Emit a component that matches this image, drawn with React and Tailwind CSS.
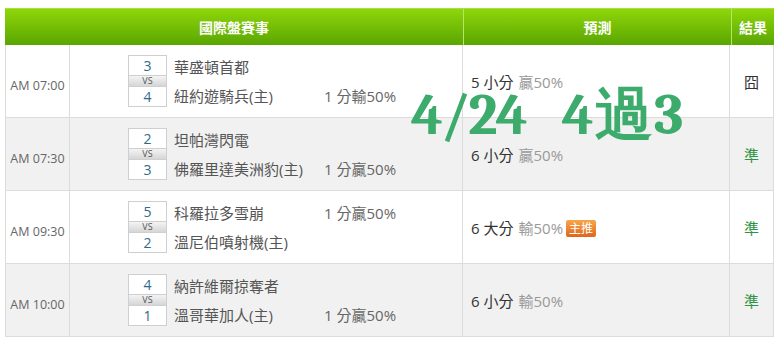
import React from "react";

const rows = [
  { time: "AM 07:00", a: "3", b: "4", teamA: "華盛頓首都", teamB: "紐約遊騎兵(主)", odds: "1 分輸50%", oddsTop: false, pn: "5 小分", pr: "贏50%", badge: false, res: "囧", win: false, gray: false },
  { time: "AM 07:30", a: "2", b: "3", teamA: "坦帕灣閃電", teamB: "佛羅里達美洲豹(主)", odds: "1 分贏50%", oddsTop: false, pn: "6 小分", pr: "贏50%", badge: false, res: "準", win: true, gray: true },
  { time: "AM 09:30", a: "5", b: "2", teamA: "科羅拉多雪崩", teamB: "溫尼伯噴射機(主)", odds: "1 分贏50%", oddsTop: true, pn: "6 大分", pr: "輸50%", badge: true, res: "準", win: true, gray: false },
  { time: "AM 10:00", a: "4", b: "1", teamA: "納許維爾掠奪者", teamB: "溫哥華加人(主)", odds: "1 分贏50%", oddsTop: false, pn: "6 小分", pr: "輸50%", badge: false, res: "準", win: true, gray: true },
];

function ScoreBox({ a, b }) {
  return (
    <div className="w-[39px] h-[52px] flex flex-col shrink-0">
      <div className="h-[21px] border border-[#cfcfcf] bg-white text-center text-[14px] leading-[19px] text-[#2f6a8a]">{a}</div>
      <div className="h-[10px] border-x border-[#cfcfcf] bg-linear-to-b from-[#f4f4f4] to-[#d6d6d6] text-center text-[9px] leading-[10px] text-[#555]">VS</div>
      <div className="h-[21px] border border-[#cfcfcf] bg-white text-center text-[14px] leading-[19px] text-[#2f6a8a]">{b}</div>
    </div>
  );
}

export default function App() {
  return (
    <div className="relative w-[780px] h-[344px] bg-white pt-[8px] pl-[5px] font-['Open_Sans','Noto_Sans_CJK_TC',sans-serif] overflow-hidden">
      <div className="w-[769px]">
        <div className="flex h-[37px] bg-linear-to-b from-[#8fd60a] to-[#5aa603] text-white font-bold text-[14px] border-t border-[#a6e03a]">
          <div className="w-[458px] flex items-center justify-center">國際盤賽事</div>
          <div className="w-[268px] flex items-center justify-center border-l border-[#b4e66a]">預測</div>
          <div className="flex-1 flex items-center justify-center border-l border-[#b4e66a]">結果</div>
        </div>
        {rows.map((r, i) => (
          <div key={i} className={`flex h-[73px] border-b border-x border-[#dcdcdc] ${r.gray ? "bg-[#f1f1f1]" : "bg-white"}`}>
            <div className="w-[64px] flex items-center justify-center border-r border-[#dcdcdc] text-[12.5px] text-[#666] pt-[10px]">{r.time}</div>
            <div className="w-[393px] flex items-center pl-[58px] border-r border-[#dcdcdc]">
              <ScoreBox a={r.a} b={r.b} />
              <div className="ml-[7px] h-[52px] flex flex-col justify-between pt-[2px] text-[15px] text-[#555] leading-[21px]">
                <div className="flex">
                  <span className="w-[150px]">{r.teamA}</span>
                  {r.oddsTop && <span className="text-[#666]">{r.odds}</span>}
                </div>
                <div className="flex">
                  <span className="w-[150px]">{r.teamB}</span>
                  {!r.oddsTop && <span className="text-[#666]">{r.odds}</span>}
                </div>
              </div>
            </div>
            <div className="w-[267px] flex items-center pl-[8px] pt-[3px] border-r border-[#dcdcdc] text-[15px]">
              <span className="text-[#333]">{r.pn}</span>
              <span className="ml-[5px] text-[#999]">{r.pr}</span>
              {r.badge && (
                <span className="ml-[3px] h-[17px] px-[3px] rounded-[2px] bg-linear-to-b from-[#f7a64a] to-[#e0651a] text-white text-[12px] leading-[17px]">主推</span>
              )}
            </div>
            <div className={`flex-1 flex items-center justify-center pt-[3px] text-[15px] ${r.win ? "text-[#2e9444]" : "text-[#333]"}`}>{r.res}</div>
          </div>
        ))}
      </div>
      <div className="absolute left-[411px] top-[87px] flex text-[58px] leading-none text-[#3cab6c] font-serif font-semibold pointer-events-none">
        <span className="tracking-[-2px]">4/24</span>
        <span className="ml-[36px] tracking-[1px]">4過3</span>
      </div>
    </div>
  );
}
